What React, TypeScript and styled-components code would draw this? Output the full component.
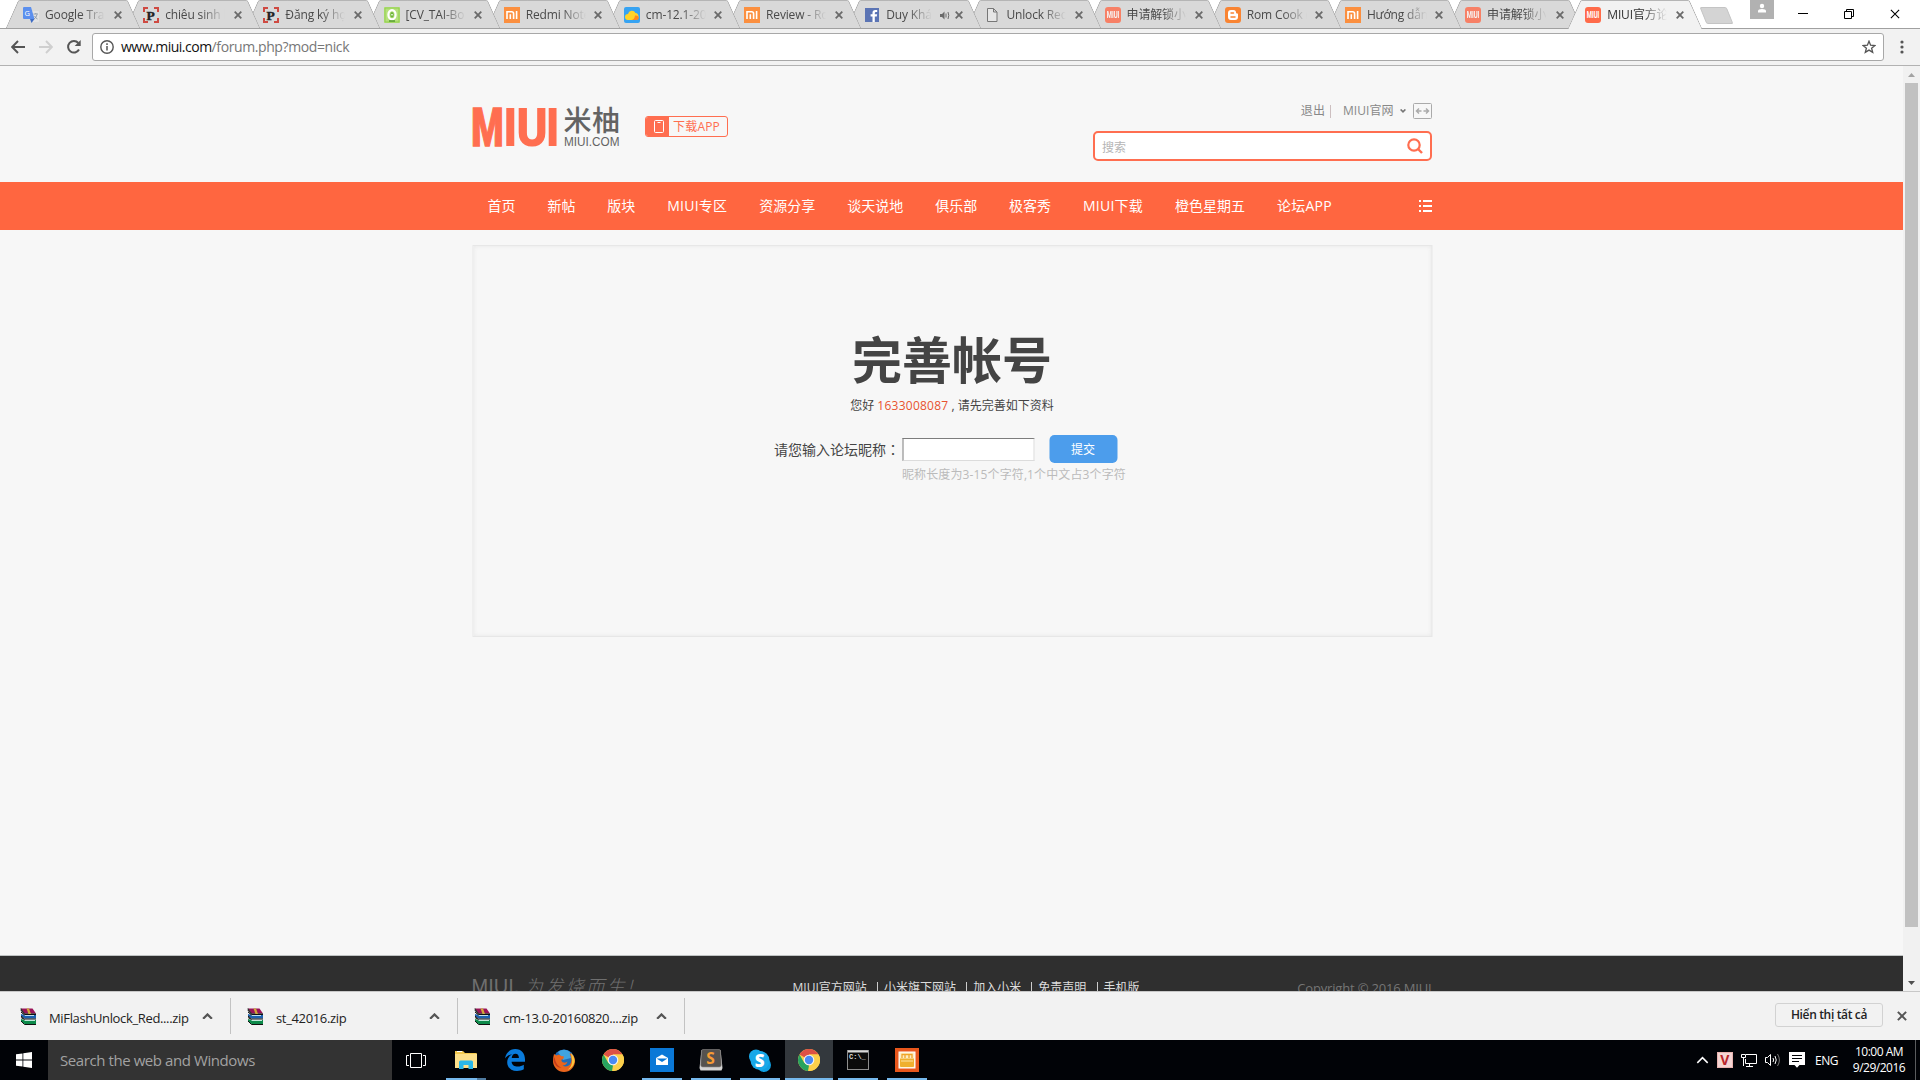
import React from "react";
import styled, { createGlobalStyle, css } from "styled-components";

const UI = `"Open Sans", "Noto Sans CJK SC", sans-serif`;

const GlobalStyle = createGlobalStyle`
  * { box-sizing: border-box; }
  html, body { margin: 0; padding: 0; overflow: hidden; }
  body { font-family: ${UI}; font-size: 12px; color: #444; background: #f7f7f7; }
`;

const Screen = styled.div`
  width: 1920px;
  height: 1080px;
  display: flex;
  flex-direction: column;
  overflow: hidden;
`;

/* ---------- tab strip ---------- */

const TabStrip = styled.div`
  height: 29px;
  flex: none;
  display: flex;
  background: #fff;
  padding-left: 6px;
  box-shadow: inset 0 -1px 0 #a0a0a0;
`;

const Tab = styled.div<{ $active?: boolean; $order: number }>`
  position: relative;
  z-index: ${(p) => (p.$active ? 40 : p.$order)};
  width: 133.5px;
  height: ${(p) => (p.$active ? 29 : 28)}px;
  margin-right: -13.33px;
  flex: none;
  display: flex;
  align-items: center;
  padding: ${(p) => (p.$active ? 1 : 2)}px 0 0 17px;
  &::before,
  &::after {
    content: "";
    position: absolute;
    z-index: -1;
    top: 0;
    bottom: 0;
    width: 80px;
    background: ${(p) => (p.$active ? "#f2f2f2" : "#d9d9d9")};
    border-top: 1px solid #b5b5b5;
  }
  &::before {
    left: 6px;
    border-left: 1px solid #a6a6a6;
    border-top-left-radius: 2px;
    transform: skewX(-24deg);
  }
  &::after {
    right: 6px;
    border-right: 1px solid #a6a6a6;
    border-top-right-radius: 2px;
    transform: skewX(24deg);
  }
`;

const TabIcon = styled.span<{ $dim?: boolean }>`
  width: 16px;
  height: 16px;
  display: flex;
  flex: none;
  opacity: ${(p) => (p.$dim ? 0.8 : 1)};
`;

const TabTitle = styled.span<{ $w: number; $dark?: boolean }>`
  width: ${(p) => p.$w}px;
  margin-left: 6px;
  flex: none;
  overflow: hidden;
  white-space: nowrap;
  font-size: 12px;
  letter-spacing: -0.15px;
  line-height: 18px;
  color: ${(p) => (p.$dark ? "#333" : "#4a4a4a")};
  mask-image: linear-gradient(90deg, #000 ${(p) => p.$w - 24}px, transparent);
`;

const TabTools = styled.span`
  display: flex;
  align-items: center;
  justify-content: flex-end;
  gap: 5px;
  flex: 1;
  padding-right: 18px;
`;

const NewTab = styled.div`
  width: 27px;
  height: 17px;
  margin: 7px 0 0 15px;
  flex: none;
  background: #d4d4d4;
  border: 1px solid #c4c4c4;
  border-radius: 2px;
  transform: skewX(22deg);
`;

const WindowButtons = styled.div`
  display: flex;
  align-items: flex-start;
  margin-left: auto;
  width: 170px;
`;

const Profile = styled.div`
  width: 24px;
  height: 19px;
  margin-right: 6px;
  background: #b1b1b1;
  display: flex;
  justify-content: center;
`;

const WinBtn = styled.div`
  width: 46px;
  height: 27px;
  display: flex;
  align-items: center;
  justify-content: center;
`;

/* ---------- toolbar ---------- */

const Toolbar = styled.div`
  height: 37px;
  flex: none;
  display: flex;
  align-items: center;
  background: #f2f2f2;
  border-bottom: 1px solid #b2b2b2;
  padding-left: 4px;
`;

const ToolBtn = styled.div<{ $w?: number }>`
  width: ${(p) => p.$w ?? 28}px;
  height: 28px;
  display: flex;
  align-items: center;
  justify-content: center;
`;

const Omnibox = styled.div`
  width: 1792px;
  height: 28px;
  margin-left: 4px;
  display: flex;
  align-items: center;
  background: #fff;
  border: 1px solid #a8a8a8;
  border-radius: 3px;
  padding: 0 7px;
`;

const Url = styled.span`
  flex: 1;
  margin-left: 7px;
  font-size: 14px;
  letter-spacing: -0.4px;
  color: #777;
  line-height: 20px;
  b { font-weight: 400; color: #111; letter-spacing: -0.5px; }
`;

/* ---------- page ---------- */

const Viewport = styled.div`
  height: 925px;
  flex: none;
  display: flex;
  overflow: hidden;
`;

const Page = styled.div`
  width: 1903px;
  background: #f7f7f7;
  display: flex;
  flex-direction: column;
`;

const Wrap = styled.div`
  width: 960px;
  margin: 0 auto;
  display: flex;
`;

const Header = styled(Wrap)`
  height: 116px;
`;

const Logo = styled.div`
  width: 148px;
  height: 42px;
  margin-top: 39px;
`;

const AppBadge = styled.div`
  width: 83px;
  height: 21px;
  margin: 50px 0 0 25.5px;
  display: flex;
  align-items: center;
  border: 1px solid #ff6e50;
  border-radius: 3px;
  overflow: hidden;
  color: #ff6e50;
  font-size: 12px;
  line-height: 19px;
  letter-spacing: 0.2px;
`;

const BadgeIcon = styled.span`
  width: 23px;
  height: 19px;
  margin-right: 4px;
  padding-left: 2px;
  background: #ff6e50;
  display: flex;
  align-items: center;
  justify-content: center;
`;

const HeadRight = styled.div`
  width: 338.5px;
  margin: 36px 0 0 auto;
`;

const UserLinks = styled.div`
  height: 18px;
  display: flex;
  justify-content: flex-end;
  align-items: center;
  color: #888;
  font-size: 12px;
  line-height: 18px;
  letter-spacing: 0.05px;
`;

const Bar = styled.i`
  width: 1px;
  height: 13px;
  margin: 0 12px 0 5px;
  background: #cdbfc0;
`;

const SiteLink = styled.span`
  margin-right: 6px;
`;

const WideToggle = styled.svg`
  margin-left: 7px;
`;

const SearchBox = styled.div`
  height: 30px;
  margin-top: 11px;
  display: flex;
  align-items: center;
  justify-content: space-between;
  background: #fff;
  border: 2px solid #ff6e50;
  border-radius: 5px;
  padding: 0 7px;
  color: #b5b5b5;
  line-height: 18px;
  span { padding-top: 3px; }
`;

const Nav = styled.div`
  height: 48px;
  flex: none;
  background: #ff6640;
`;

const NavRow = styled(Wrap)`
  height: 48px;
  align-items: center;
  padding-left: 16px;
  gap: 31.9px;
  color: #fff;
  font-size: 14px;
  line-height: 20px;
  svg { margin-left: auto; }
`;

const NavItem = styled.span<{ $w: number; $latin?: boolean }>`
  width: ${(p) => p.$w}px;
  flex: none;
  white-space: nowrap;
  padding-bottom: 1px;
  letter-spacing: ${(p) => (p.$latin ? 0.25 : 0)}px;
`;

const Panel = styled.div`
  width: 960px;
  height: 392px;
  margin: 15px auto 0;
  transform: translateX(0.5px);
  flex: none;
  border: 1px solid #e7e7e7;
  box-shadow: inset 0 0 4px #e6e6e6;
  display: flex;
  flex-direction: column;
  align-items: center;
`;

const Title = styled.h1`
  margin: 79px 0 0;
  font-size: 50px;
  line-height: 70px;
  font-weight: 700;
  color: #444;
`;

const Hello = styled.p`
  margin: 2px 0 0;
  font-size: 12px;
  line-height: 18px;
  color: #444;
  white-space: pre;
  b { font-weight: 400; color: #e8532f; letter-spacing: 0.25px; }
`;

const Form = styled.div`
  width: 960px;
  margin-top: 20px;
  padding-left: 302px;
  display: flex;
  align-items: center;
`;

const Label = styled.label`
  width: 128px;
  font-size: 14px;
  line-height: 20px;
  white-space: nowrap;
`;

const Colon = styled.span`
  font-family: "Noto Sans CJK TC", sans-serif;
`;

const NickInput = styled.input`
  width: 132px;
  height: 23px;
  padding: 1px 2px;
  background: #fff;
  border: 1px solid;
  border-color: #7d7d7d #dcdcdc #dcdcdc #7d7d7d;
  outline: none;
`;

const Submit = styled.button`
  width: 68px;
  height: 28px;
  margin-left: 15px;
  padding: 1px 0 0;
  border: 0;
  border-radius: 5px;
  background: #4c9dec;
  color: #fff;
  font: 12px/27px ${UI};
`;

const Hint = styled.div`
  width: 960px;
  padding-left: 430px;
  margin-top: 3px;
  line-height: 18px;
  letter-spacing: 0.12px;
  color: #bbb;
`;

const Footer = styled.div`
  height: 36px;
  margin-top: auto;
  flex: none;
  overflow: hidden;
  background: #2f2f2f;
  border-top: 1px solid #bfc3c3;
`;

const FootRow = styled(Wrap)`
  align-items: flex-start;
`;

const Slogan = styled.div`
  width: 321px;
  padding-top: 14px;
  font: 300 20px/30px "Liberation Sans", "Noto Sans CJK SC", sans-serif;
  color: #6f6f6f;
  white-space: nowrap;
  em { font: italic 300 18px/30px "Noto Sans CJK SC", sans-serif; letter-spacing: 2.5px; }
`;

const FootLinks = styled.div`
  display: flex;
  align-items: center;
  padding-top: 23px;
  color: #ddd;
  line-height: 18px;
`;

const FootBar = styled.i`
  width: 1px;
  height: 13px;
  margin: 0 6px 0 10.2px;
  background: #ccc;
`;

const Copyright = styled.div`
  margin-left: auto;
  padding-top: 23px;
  font-size: 13px;
  letter-spacing: -0.17px;
  line-height: 18px;
  color: #757575;
`;

const Scrollbar = styled.div`
  width: 17px;
  display: flex;
  flex-direction: column;
  align-items: center;
  background: #f1f1f1;
`;

const ScrollArrow = styled.div`
  height: 17px;
  display: flex;
  align-items: center;
`;

const Thumb = styled.div`
  width: 13px;
  height: 844px;
  margin-bottom: auto;
  background: #c1c1c1;
`;

/* ---------- downloads ---------- */

const Downloads = styled.div`
  height: 49px;
  flex: none;
  display: flex;
  align-items: center;
  background: #f2f2f2;
  border-top: 1px solid #c8c8c8;
`;

const Download = styled.div<{ $w: number; $first?: boolean }>`
  width: ${(p) => p.$w}px;
  height: 36px;
  display: flex;
  align-items: center;
  border-right: 1px solid #c3c3c3;
  padding: 0 17px 0 ${(p) => (p.$first ? 20 : 16)}px;
  font-size: 13px;
  color: #222;
  svg { flex: none; }
`;

const FileName = styled.span`
  flex: 1;
  margin-left: 12px;
  padding-top: 3px;
  white-space: nowrap;
  letter-spacing: -0.35px;
`;

const ShowAll = styled.div`
  width: 108px;
  height: 24px;
  margin: 0 12px 2px auto;
  border: 1px solid #d2d2d2;
  border-radius: 3px;
  text-align: center;
  font-size: 12px;
  line-height: 21px;
  font-weight: 600;
  letter-spacing: -0.35px;
  color: #222;
`;

const CloseBar = styled.div`
  width: 16px;
  display: flex;
  margin-right: 9px;
  padding-left: 2px;
`;

/* ---------- taskbar ---------- */

const Taskbar = styled.div`
  height: 40px;
  flex: none;
  display: flex;
  background: #010307;
`;

const Start = styled.div`
  width: 48px;
  display: flex;
  align-items: center;
  justify-content: center;
`;

const TaskSearch = styled.div`
  width: 344px;
  padding-left: 12px;
  background: #333;
  color: #a2a2a2;
  font-size: 15px;
  line-height: 41px;
  letter-spacing: -0.42px;
`;

const TaskItem = styled.div<{ $state?: "run" | "stack" | "active"; $gap?: number }>`
  width: 48px;
  height: 40px;
  margin-right: ${(p) => p.$gap ?? 1}px;
  display: flex;
  align-items: center;
  justify-content: center;
  ${(p) => p.$state === "active" && css`background: #33383d; border-bottom: 2px solid #76b9ed; padding-top: 2px;`}
  ${(p) =>
    p.$state === "run" &&
    css`background: linear-gradient(#76b9ed, #76b9ed) center bottom / 40px 2px no-repeat;`}
  ${(p) =>
    p.$state === "stack" &&
    css`background: linear-gradient(90deg, #76b9ed 31px, #4f7ba0 31px) center bottom / 40px 2px no-repeat;`}
`;

const Tray = styled.div`
  margin-left: auto;
  display: flex;
  align-items: center;
  gap: 8px;
  color: #fff;
  font-size: 12px;
`;

const Lang = styled.span`
  width: 24px;
  margin-left: 2px;
  letter-spacing: -0.5px;
`;

const Clock = styled.div`
  width: 54px;
  margin: 0 1px 0 5px;
  text-align: center;
  line-height: 16px;
  letter-spacing: -0.5px;
  white-space: nowrap;
`;

const ShowDesktop = styled.div`
  width: 5px;
  height: 40px;
  border-left: 1px solid #5a5c5e;
`;

/* ---------- drawings ---------- */

const Cross = ({ s = 8, w = 1.8, c = "#6a6a6a" }: { s?: number; w?: number; c?: string }) => (
  <svg width={s} height={s} viewBox="0 0 8 8">
    <path d="M.7.7l6.6 6.6M7.3.7L.7 7.3" stroke={c} strokeWidth={(w * 8) / s} />
  </svg>
);

const MiIcon = () => (
  <svg width="16" height="16" viewBox="0 0 16 16">
    <rect width="16" height="16" fill="#fb8f3f" />
    <path d="M3 12V4.8h4.6q2 0 2 2V12M6.3 12V7.3M12.6 4v8" fill="none" stroke="#fff" strokeWidth="1.6" />
  </svg>
);

const MiuiIcon = () => (
  <svg width="16" height="16" viewBox="0 0 16 16">
    <rect width="16" height="16" rx="3" fill="#ff6b4a" />
    <text x="1.7" y="11.3" fontFamily="Roboto" fontWeight="700" fontSize="9" fill="#fff" textLength="12.6" lengthAdjust="spacingAndGlyphs">MIUI</text>
  </svg>
);

const PIcon = () => (
  <svg width="16" height="16" viewBox="0 0 16 16">
    <path d="M1 5V1h4M11 1h4v4M15 11v4h-4M5 15H1v-4" fill="none" stroke="#cf4a42" strokeWidth="2" />
    <text x="3.6" y="12.5" fontFamily="Liberation Serif" fontWeight="700" fontSize="13.5" fill="#222" stroke="#222" strokeWidth=".4">P</text>
  </svg>
);

const TranslateIcon = () => (
  <svg width="16" height="16" viewBox="0 0 16 16">
    <path d="M6 4h9q1 0 1 1v9q0 1-1 1H9z" fill="#e3e3e3" />
    <path d="M1 0h7l3.5 12H1q-1 0-1-1V1q0-1 1-1z" fill="#5b8fee" />
    <path d="M7 12h4.500L8.500 16z" fill="#3e6cc4" />
    <text x="1.6" y="9" fontFamily="Open Sans" fontSize="7.5" fill="#fff">G</text>
    <path d="M10.500 7h4.500M12.800 6v1M14 7.500q-.5 3-3 4.500M11.500 9q1 2 3 3" fill="none" stroke="#8a97a8" strokeWidth=".9" />
  </svg>
);

const GreenIcon = () => (
  <svg width="16" height="16" viewBox="0 0 16 16">
    <rect width="16" height="16" rx="1" fill="#b6e07c" />
    <rect x="1" y="1" width="14" height="14" fill="none" stroke="#91cf4f" />
    <ellipse cx="8" cy="7.800" rx="3.600" ry="4.600" fill="none" stroke="#fff" strokeWidth="2.200" />
    <ellipse cx="8" cy="7.800" rx="1.700" ry="2.800" fill="#6db33c" />
    <path d="M7 7.800h2" stroke="#fff" strokeWidth="1" />
    <path d="M5 14h6" stroke="#4f9a2c" strokeWidth="1.400" />
  </svg>
);

const CloudIcon = () => (
  <svg width="16" height="16" viewBox="0 0 16 16">
    <rect width="16" height="16" rx="2" fill="#36a3f2" />
    <path d="M4 13a3 3 0 010-6 4 4 0 017.500-1A3.600 3.600 0 0112 13z" fill="#ffd428" />
    <path d="M7.500 13q3-.5 3.500-4.500 3.500-.5 3.800 2 0 2.500-2.500 2.500z" fill="#ff8a1e" />
  </svg>
);

const FbIcon = () => (
  <svg width="16" height="16" viewBox="0 0 16 16">
    <rect x="1" y="1" width="14" height="14" fill="#5b74b4" />
    <path d="M10.800 15V9.500h2l.3-2.200h-2.300V6q0-1 1.200-1h1.200V3h-2Q8.500 3 8.500 5.700v1.600H6.600v2.200h1.900V15z" fill="#fff" />
  </svg>
);

const FileIcon = () => (
  <svg width="16" height="16" viewBox="0 0 16 16">
    <path d="M3.500 1.500h6l3.500 3.500v9.500H3.500zM9.500 1.500V5H13" fill="#e6e6e6" stroke="#777" />
  </svg>
);

const BloggerIcon = () => (
  <svg width="16" height="16" viewBox="0 0 16 16">
    <rect width="16" height="16" rx="3" fill="#f98432" />
    <path d="M6 3h2.500Q11 3 11 5.500q0 1 1 1h.5q.5 0 .5.700V10q0 3-3 3H6q-3 0-3-3V6q0-3 3-3z" fill="#fff" />
    <path d="M6 6h2.500M6 10h4" stroke="#f98432" strokeWidth="1.500" strokeLinecap="round" />
  </svg>
);

const Speaker = () => (
  <svg width="10" height="9" viewBox="0 0 10 9">
    <path d="M0 3h2l2.500-2.500v8L2 6H0z" fill="#6a6a6a" />
    <path d="M6 2.500v4M8 1q1.500 3.500 0 7" fill="none" stroke="#6a6a6a" />
  </svg>
);

const Zip = () => (
  <svg width="17" height="17" viewBox="0 0 17 17">
    <path d="M1 .5h11.500l3.500 5H4.500z" fill="#9a1458" />
    <path d="M1 .5l3.500 5v1L1 2.500zM4.500 5.500H16" fill="#222" stroke="#222" strokeWidth=".6" />
    <path d="M1 6l3.500 1h11.500v3.500H4.500L1 8z" fill="#1d62b0" />
    <path d="M4.500 7.300H14M4.500 12.300H15" stroke="#eff" />
    <path d="M1 11l3.500 1h11.500v4H4.500L1 13.500z" fill="#0d8a4a" />
    <path d="M4.500 12.300H15" stroke="#eff" />
    <path d="M1 4l3.500 3M1 8l3.500 3M1 9.500l3.500 2M1 13l3.500 3.500M4.500 6.500H16M4.500 11H16M4.500 16.500H16" stroke="#111" />
    <path d="M6.500.5h2.500l2 5.500H8.500z" fill="#d0a83a" />
  </svg>
);

const Chevron = ({ c = "#555", w = 10, flip = false, sw = 2 }: { c?: string; w?: number; flip?: boolean; sw?: number }) => (
  <svg width={w} height={w * 0.6} viewBox="0 0 10 6">
    <path d={flip ? "M1 .7l4 4 4-4" : "M1 5.300l4-4 4 4"} fill="none" stroke={c} strokeWidth={sw} />
  </svg>
);

const Chrome = () => (
  <svg width="22" height="22" viewBox="0 0 22 22">
    <circle cx="11" cy="11" r="11" fill="#fcd04b" />
    <path d="M11 11L1.500 5.500A11 11 0 0120.500 5.500H11z" fill="#dd5145" />
    <path d="M1.500 5.500L6.200 13.700 11 16.500 10 22A11 11 0 011.500 5.500z" fill="#27a35f" />
    <path d="M15.700 13.800L10.500 22A11 11 0 0020.500 5.500H11z" fill="#fcd04b" />
    <circle cx="11" cy="11" r="5.300" fill="#f4f4f4" />
    <circle cx="11" cy="11" r="4.200" fill="#4a8af4" />
  </svg>
);

const Explorer = () => (
  <svg width="22" height="20" viewBox="0 0 22 20">
    <path d="M0 1h8l2 2h11q1 0 1 1v14H0z" fill="#f3c94f" />
    <path d="M0 4h22v14H0z" fill="#fde08a" />
    <path d="M2 1.500h5" stroke="#fff" />
    <path d="M4 19v-7q0-1.500 1.500-1.500h11q1.500 0 1.500 1.500v7h-4.500v-4h-5v4z" fill="#29b7e8" />
  </svg>
);

const Edge = () => (
  <svg width="20" height="22" viewBox="0 0 20 22">
    <path
      d="M0 9.500C.8 3.800 4.800 0 10.300 0 16.500 0 20 4.500 20 10.300v2.400H6.600c.2 3.200 2.900 4.900 6.200 4.900 2.300 0 4.200-.7 6-1.800v4.500C16.900 21.400 14.700 22 12 22 6 22 2.200 18.300 2.200 13.200c0-3.300 1.900-6.300 5.200-7.900C4.400 5.600 1.800 7.100 0 9.500zM6.700 8.900h7.200c0-2.700-1.300-4.200-3.500-4.200-2 0-3.400 1.600-3.700 4.200z"
      fill="#0a7bdb"
    />
  </svg>
);

const Firefox = () => (
  <svg width="22" height="23" viewBox="0 0 22 23">
    <circle cx="11" cy="11" r="10.500" fill="#1f6cb8" />
    <path d="M5 3Q11-1.500 17 3l1 6-8 2z" fill="#3fa4e0" />
    <path d="M1 5l2.500 1.500Q6 5 8 7l3 .5Q11 10 8.500 10.500 8 13 11 13.500q2 .5 3.500-1-1 4-5 4 4 2.500 7.500-1 3-4-.5-11.500Q22 6 22 12a11 11 0 01-22 0q0-4 1-7z" fill="#e9651d" />
    <path d="M18 4q4 4 3.500 9-1.500 6-7 8 5-4 4.500-10z" fill="#fbc53b" />
    <path d="M1.500 8q1 8 7 11-7-1-8-8z" fill="#c63a1a" />
  </svg>
);

const Mail = () => (
  <svg width="24" height="24" viewBox="0 0 24 24">
    <rect width="24" height="24" fill="#0a78d7" />
    <path d="M6 10l6-3.500 6 3.500v7H6z" fill="#fff" />
    <path d="M6.500 10.500h11L12 14z" fill="#0a78d7" />
  </svg>
);

const Sublime = () => (
  <svg width="24" height="22" viewBox="0 0 24 22">
    <path d="M2.500 1h19l2 18-1 2.500h-21L.5 19z" fill="#d4d4d4" />
    <path d="M4 .5h16q1.500 0 1.500 1.500l.8 14q0 2-2 2H3.700q-2 0-2-2L2.500 2Q2.500.5 4 .5z" fill="#55524f" stroke="#8b8886" strokeWidth=".6" />
    <text x="7.300" y="14.800" fontFamily="Open Sans" fontWeight="700" fontSize="15.500" fill="#f79b34">S</text>
  </svg>
);

const Skype = () => (
  <svg width="22" height="23" viewBox="0 0 22 23">
    <circle cx="7" cy="7.500" r="7" fill="#18a8e8" />
    <circle cx="15" cy="16" r="7" fill="#0f9fe2" />
    <circle cx="11" cy="11.500" r="9.500" fill="#18a8e8" />
    <text x="5.800" y="17.500" fontFamily="Open Sans" fontWeight="800" fontSize="17" fill="#fff">S</text>
  </svg>
);

const Cmd = () => (
  <svg width="22" height="20" viewBox="0 0 22 20">
    <rect x=".5" y=".5" width="21" height="19" fill="#0b0b0b" stroke="#8d8d8d" />
    <path d="M1 1.500h20" stroke="#d9d9d9" strokeWidth="2" />
    <text x="2" y="9" fontFamily="Liberation Mono" fontWeight="700" fontSize="7" fill="#ddd">C:\_</text>
  </svg>
);

const MiFlash = () => (
  <svg width="24" height="24" viewBox="0 0 24 24">
    <rect width="24" height="24" fill="#e8571c" />
    <rect x="4" y="4" width="16" height="16" fill="#fdeec4" stroke="#fff" strokeWidth="1" />
    <path d="M7 10V6.500h10V10M10 6.500V10M14 6.500V10" fill="none" stroke="#f0a428" strokeWidth="1.300" />
    <path d="M5 10.500h14V18q0 1-1 1H6q-1 0-1-1z" fill="#efb02e" />
    <path d="M6 13h12" stroke="#fbe3a4" />
  </svg>
);

const Brand = () => (
  <svg width="148" height="42" viewBox="0 0 148 42">
    <g fontFamily="Roboto" fontWeight="900" fontSize="53.5" fill="#ff6e50">
      <text transform="translate(-.7 41) scale(.69 1)" stroke="#ff6e50" strokeWidth="1.3">M</text>
      <text transform="translate(31.150 41) scale(.87 1)">I</text>
      <text transform="translate(44.300 41) scale(.89 1)">U</text>
      <text transform="translate(73.800 41) scale(.85 1)">I</text>
    </g>
    <g fill="#636363">
      <text x="91.500" y="25.500" fontFamily="Noto Sans CJK SC" fontWeight="500" fontSize="28" textLength="56.500">米柚</text>
      <text x="92" y="41" fontFamily="Liberation Sans" fontSize="12.500" textLength="55.500" lengthAdjust="spacingAndGlyphs">MIUI.COM</text>
    </g>
  </svg>
);

type TabInfo = { title: string; icon: React.ReactNode; sound?: boolean; dim?: boolean };

const tabs: TabInfo[] = [
  { title: "Google Translate", icon: <TranslateIcon /> },
  { title: "chiêu sinh lớp", icon: <PIcon /> },
  { title: "Đăng ký học", icon: <PIcon /> },
  { title: "[CV_TAI-Bo", icon: <GreenIcon /> },
  { title: "Redmi Note", icon: <MiIcon /> },
  { title: "cm-12.1-2015", icon: <CloudIcon /> },
  { title: "Review - Rom", icon: <MiIcon /> },
  { title: "Duy Khánh", icon: <FbIcon />, sound: true },
  { title: "Unlock Redmi", icon: <FileIcon /> },
  { title: "申请解锁小米", icon: <MiuiIcon />, dim: true },
  { title: "Rom Cook (", icon: <BloggerIcon /> },
  { title: "Hướng dẫn", icon: <MiIcon /> },
  { title: "申请解锁小米", icon: <MiuiIcon />, dim: true },
  { title: "MIUI官方论坛", icon: <MiuiIcon /> },
];

const nav: { text: string; w: number; latin?: boolean }[] = [
  { text: "首页", w: 28 },
  { text: "新帖", w: 28 },
  { text: "版块", w: 28 },
  { text: "MIUI专区", w: 60.3, latin: true },
  { text: "资源分享", w: 56 },
  { text: "谈天说地", w: 56 },
  { text: "俱乐部", w: 42 },
  { text: "极客秀", w: 42 },
  { text: "MIUI下载", w: 60.3, latin: true },
  { text: "橙色星期五", w: 70 },
  { text: "论坛APP", w: 56, latin: true },
];

const footLinks = ["MIUI官方网站", "小米旗下网站", "加入小米", "免责声明", "手机版"];

const files = [
  { name: "MiFlashUnlock_Red....zip", w: 231 },
  { name: "st_42016.zip", w: 227 },
  { name: "cm-13.0-20160820....zip", w: 227 },
];

export default function App() {
  return (
    <Screen>
      <GlobalStyle />
      <TabStrip>
        {tabs.map((t, i) => {
          const active = i === tabs.length - 1;
          return (
            <Tab key={i} $active={active} $order={30 - i}>
              <TabIcon $dim={t.dim}>{t.icon}</TabIcon>
              <TabTitle $w={t.sound ? 46 : 60} $dark={active}>{t.title}</TabTitle>
              <TabTools>
                {t.sound && <Speaker />}
                <Cross />
              </TabTools>
            </Tab>
          );
        })}
        <NewTab />
        <WindowButtons>
          <Profile>
            <svg width="10" height="13" viewBox="0 0 10 13">
              <circle cx="5" cy="6" r="2.200" fill="#fff" />
              <path d="M1 12.500v-1.500Q1 9 5 9t4 2v1.500z" fill="#fff" />
            </svg>
          </Profile>
          <WinBtn>
            <svg width="10" height="1"><rect width="10" height="1" fill="#000" /></svg>
          </WinBtn>
          <WinBtn>
            <svg width="10" height="10" viewBox="0 0 10 10">
              <path d="M.5 2.500h7v7h-7zM2.500 2.500v-2h7v7h-2" fill="none" stroke="#000" />
            </svg>
          </WinBtn>
          <WinBtn><Cross s={10} w={1.1} c="#000" /></WinBtn>
        </WindowButtons>
      </TabStrip>

      <Toolbar>
        <ToolBtn>
          <svg width="14" height="14" viewBox="0 0 14 14"><path d="M14 7H1.500M7 1L1.200 7 7 13" fill="none" stroke="#555" strokeWidth="1.900" /></svg>
        </ToolBtn>
        <ToolBtn>
          <svg width="14" height="14" viewBox="0 0 14 14"><path d="M0 7h12.500M7 1l5.800 6L7 13" fill="none" stroke="#cfcfcf" strokeWidth="1.900" /></svg>
        </ToolBtn>
        <ToolBtn>
          <svg width="16" height="16" viewBox="0 0 16 16">
            <path d="M13 10.500A5.800 5.800 0 1112.300 4" fill="none" stroke="#555" strokeWidth="2" />
            <path d="M14.700 1v6h-6z" fill="#555" />
          </svg>
        </ToolBtn>
        <Omnibox>
          <svg width="14" height="14" viewBox="0 0 14 14">
            <circle cx="7" cy="7" r="6.200" fill="none" stroke="#555" strokeWidth="1.400" />
            <path d="M7 6v4.500M7 3.300v1.600" stroke="#555" strokeWidth="1.500" />
          </svg>
          <Url><b>www.miui.com</b>/forum.php?mod=nick</Url>
          <svg width="14" height="14" viewBox="0 0 14 14">
            <path d="M7 1.200l1.600 4 4.300.3-3.300 2.700 1.100 4.200L7 10.100l-3.700 2.300 1.100-4.200L1.100 5.500l4.300-.3z" fill="none" stroke="#555" strokeWidth="1.300" />
          </svg>
        </Omnibox>
        <ToolBtn $w={36}>
          <svg width="4" height="14" viewBox="0 0 4 14">
            <circle cx="2" cy="2" r="1.600" fill="#555" /><circle cx="2" cy="7" r="1.600" fill="#555" /><circle cx="2" cy="12" r="1.600" fill="#555" />
          </svg>
        </ToolBtn>
      </Toolbar>

      <Viewport>
        <Page>
          <Header>
            <Logo><Brand /></Logo>
            <AppBadge>
              <BadgeIcon>
                <svg width="10" height="13" viewBox="0 0 10 13">
                  <rect x=".5" y=".5" width="9" height="12" rx="1" fill="none" stroke="#fff" />
                  <path d="M3.500 2.500h3" stroke="#fff" />
                </svg>
              </BadgeIcon>
              下载APP
            </AppBadge>
            <HeadRight>
              <UserLinks>
                <span>退出</span>
                <Bar />
                <SiteLink>MIUI官网</SiteLink>
                <Chevron w={6} flip c="#777" sw={2.6} />
                <WideToggle width="19" height="16" viewBox="0 0 19 16">
                  <rect x=".5" y=".5" width="18" height="15" rx="1" fill="none" stroke="#aaa" />
                  <path d="M3.500 8h5M6 5.500L3.500 8 6 10.500M15.500 8h-5M13 5.500L15.500 8 13 10.500" fill="none" stroke="#aaa" strokeWidth="1.500" />
                </WideToggle>
              </UserLinks>
              <SearchBox>
                <span>搜索</span>
                <svg width="16" height="16" viewBox="0 0 16 16">
                  <circle cx="7" cy="7" r="5.700" fill="none" stroke="#ff6e50" strokeWidth="2.200" />
                  <path d="M11 11l4 4" stroke="#ff6e50" strokeWidth="2.400" />
                </svg>
              </SearchBox>
            </HeadRight>
          </Header>
          <Nav>
            <NavRow>
              {nav.map((n) => <NavItem key={n.text} $w={n.w} $latin={n.latin}>{n.text}</NavItem>)}
              <svg width="13" height="12" viewBox="0 0 13 12">
                <path d="M0 1h2M4 1h9M0 6h2M4 6h9M0 11h2M4 11h9" stroke="#fff" strokeWidth="2" />
              </svg>
            </NavRow>
          </Nav>
          <Panel>
            <Title>完善帐号</Title>
            <Hello>您好 <b>1633008087</b> , 请先完善如下资料</Hello>
            <Form>
              <Label>请您输入论坛昵称<Colon lang="zh-TW">：</Colon></Label>
              <NickInput />
              <Submit>提交</Submit>
            </Form>
            <Hint>昵称长度为3-15个字符,1个中文占3个字符</Hint>
          </Panel>
          <Footer>
            <FootRow>
              <Slogan>MIUI, <em>为发烧而生!</em></Slogan>
              <FootLinks>
                {footLinks.map((l, i) => (
                  <React.Fragment key={l}>
                    {i > 0 && <FootBar />}
                    <span>{l}</span>
                  </React.Fragment>
                ))}
              </FootLinks>
              <Copyright>Copyright © 2016 MIUI</Copyright>
            </FootRow>
          </Footer>
        </Page>
        <Scrollbar>
          <ScrollArrow><svg width="7" height="4"><path d="M0 4l3.500-4L7 4z" fill="#a3a3a3" /></svg></ScrollArrow>
          <Thumb />
          <ScrollArrow><svg width="7" height="4"><path d="M0 0l3.500 4L7 0z" fill="#505050" /></svg></ScrollArrow>
        </Scrollbar>
      </Viewport>

      <Downloads>
        {files.map((f, i) => (
          <Download key={f.name} $w={f.w} $first={i === 0}>
            <Zip />
            <FileName>{f.name}</FileName>
            <Chevron w={11} />
          </Download>
        ))}
        <ShowAll>Hiển thị tất cả</ShowAll>
        <CloseBar><Cross s={10} w={2} c="#555" /></CloseBar>
      </Downloads>

      <Taskbar>
        <Start>
          <svg width="16" height="16" viewBox="0 0 16 16">
            <path d="M0 2.300L6.500 1.400v6.200H0zM7.300 1.200L16 0v7.600H7.300zM0 8.400h6.500v6.200L0 13.700zM7.300 8.400H16V16l-8.700-1.200z" fill="#fff" />
          </svg>
        </Start>
        <TaskSearch>Search the web and Windows</TaskSearch>
        <TaskItem $gap={2}>
          <svg width="20" height="15" viewBox="0 0 20 15">
            <path d="M4.500.5h11v14h-11zM3 2.500H.5v10H3M17 2.500h2.500v10H17" fill="none" stroke="#fff" />
          </svg>
        </TaskItem>
        <TaskItem $state="stack"><Explorer /></TaskItem>
        <TaskItem><Edge /></TaskItem>
        <TaskItem><Firefox /></TaskItem>
        <TaskItem><Chrome /></TaskItem>
        <TaskItem $state="run"><Mail /></TaskItem>
        <TaskItem $state="run"><Sublime /></TaskItem>
        <TaskItem $state="run"><Skype /></TaskItem>
        <TaskItem $state="active"><Chrome /></TaskItem>
        <TaskItem $state="run"><Cmd /></TaskItem>
        <TaskItem $state="run"><MiFlash /></TaskItem>
        <Tray>
          <Chevron w={13} c="#fff" sw={1.2} />
          <svg width="16" height="16" viewBox="0 0 16 16">
            <rect width="16" height="16" fill="#e9b3b0" />
            <rect x="1" y="1" width="14" height="14" fill="#f4d5d3" />
            <text x="3.300" y="12.800" fontFamily="Open Sans" fontWeight="700" fontSize="14" fill="#b8252a">V</text>
          </svg>
          <svg width="16" height="16" viewBox="0 0 16 16">
            <path d="M5 2.500h10.500v9H4.500V7M8.500 12v3M5 14.500h7M.5 2.500h4v3h-4zM2.500 6v8" fill="none" stroke="#fff" />
          </svg>
          <svg width="16" height="16" viewBox="0 0 16 16">
            <path d="M.5 5.500h2l3-3v11l-3-3h-2z" fill="none" stroke="#fff" />
            <path d="M8 6q1.200 2 0 4M10 4q2.500 4 0 8" fill="none" stroke="#fff" />
            <path d="M12.500 2q3.800 6 0 12" fill="none" stroke="#777" />
          </svg>
          <svg width="16" height="16" viewBox="0 0 16 16">
            <path d="M0 0h16v13h-5.500L8 15.800 5.500 13H0z" fill="#fff" />
            <path d="M3 3.500h10M3 6.500h10M3 9.500h7" stroke="#010307" />
          </svg>
          <Lang>ENG</Lang>
          <Clock>10:00 AM<br />9/29/2016</Clock>
          <ShowDesktop />
        </Tray>
      </Taskbar>
    </Screen>
  );
}
